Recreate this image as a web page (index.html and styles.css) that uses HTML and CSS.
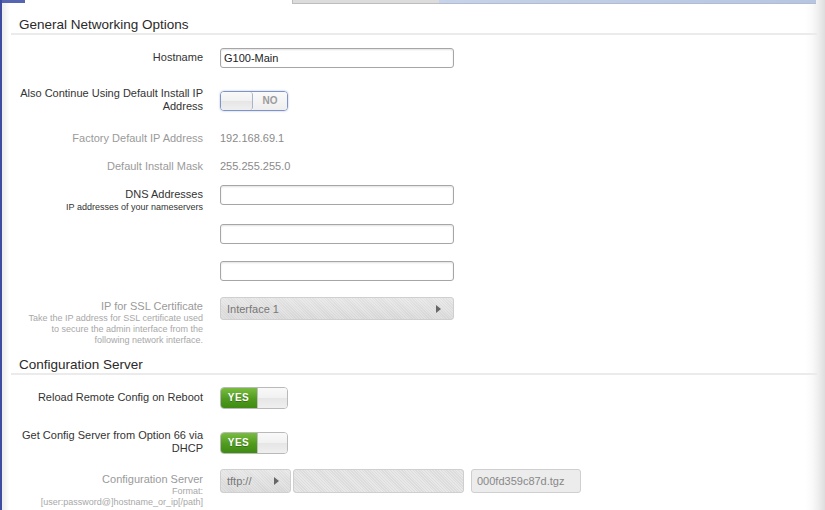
FILE: index.html
```html
<!DOCTYPE html>
<html>
<head>
<meta charset="utf-8">
<link rel="stylesheet" href="styles.css">
</head>
<body>
<div class="frame">
  <div class="tabs">
    <div class="tab tab-active"></div>
    <div class="tab tab-blank"></div>
    <div class="tab tab-grey"></div>
    <div class="tab tab-blue"></div>
  </div>
  <div class="panel">
    <h2 class="section first">General Networking Options</h2>

    <div class="row r-host">
      <div class="label pad2">Hostname</div>
      <div class="ctrl"><div class="input">G100-Main</div></div>
    </div>

    <div class="row r-also">
      <div class="label two">Also Continue Using Default Install IP<br>Address</div>
      <div class="ctrl"><div class="toggle off mt5"><span class="knob"></span><span class="state">NO</span></div></div>
    </div>

    <div class="row r-28">
      <div class="label dim">Factory Default IP Address</div>
      <div class="ctrl value">192.168.69.1</div>
    </div>

    <div class="row r-26">
      <div class="label dim">Default Install Mask</div>
      <div class="ctrl value">255.255.255.0</div>
    </div>

    <div class="row r-39">
      <div class="label pad2">DNS Addresses<div class="sub dark">IP addresses of your nameservers</div></div>
      <div class="ctrl"><div class="input"></div></div>
    </div>

    <div class="row r-37">
      <div class="label"></div>
      <div class="ctrl"><div class="input"></div></div>
    </div>

    <div class="row r-36">
      <div class="label"></div>
      <div class="ctrl"><div class="input"></div></div>
    </div>

    <div class="row r-ssl">
      <div class="label pad2 dim">IP for SSL Certificate<div class="sub">Take the IP address for SSL certificate used<br>to secure the admin interface from the<br>following network interface.</div></div>
      <div class="ctrl"><div class="select wide"><span>Interface 1</span><span class="arrow"></span></div></div>
    </div>

    <h2 class="section">Configuration Server</h2>

    <div class="row r-41 mt12">
      <div class="label pad3">Reload Remote Config on Reboot</div>
      <div class="ctrl"><div class="toggle on"><span class="state">YES</span><span class="knob"></span></div></div>
    </div>

    <div class="row r-41">
      <div class="label two">Get Config Server from Option 66 via<br>DHCP</div>
      <div class="ctrl"><div class="toggle on mt4"><span class="state">YES</span><span class="knob"></span></div></div>
    </div>

    <div class="row">
      <div class="label pad3 dim">Configuration Server<div class="sub">Format:<br>[user:password@]hostname_or_ip[/path]</div></div>
      <div class="ctrl inline">
        <div class="select proto"><span>tftp://</span><span class="arrow"></span></div>
        <div class="input hatched host"></div>
        <div class="input disabled file">000fd359c87d.tgz</div>
      </div>
    </div>
  </div>
</div>
</body>
</html>
```

FILE: styles.css
```css
html, body {
  margin: 0;
  padding: 0;
  background: #fff;
  height: 100%;
  overflow: hidden;
}

.frame {
  height: 510px;
  border-left: 2px solid #3d4c9f;
  background:
    linear-gradient(to left, #dedede 0, #efefef 7px, #fafafa 13px, rgba(255,255,255,0) 20px),
    linear-gradient(to right, #ececec 0, rgba(255,255,255,0) 8px),
    #fff;
  font-family: "Liberation Sans", Arial, sans-serif;
  color: #333;
}

.tabs {
  display: flex;
  height: 4px;
}
.tab { height: 100%; }
.tab-active { width: 23px; background: #5565b2; height: 3px; }
.tab-blank { width: 267px; }
.tab-grey {
  width: 147px;
  background: #dcdcdc;
  border-bottom: 1px solid #bdbdbd;
  border-left: 1px solid #bdbdbd;
  box-sizing: border-box;
}
.tab-blue {
  width: 377px;
  background: linear-gradient(to right, #c6d3e8, #b6c6e2);
  border-bottom: 1px solid #b2bccc;
  box-sizing: border-box;
}

.panel {
  display: flex;
  flex-direction: column;
}

.section {
  margin: 0 8px 0 9px;
  padding: 0 0 0 8px;
  font-size: 13.5px;
  font-weight: normal;
  line-height: 16px;
  height: 16px;
  color: #2a2a2a;
  border-bottom: 2px solid #ebebeb;
}
.section.first { margin-top: 13px; }

.row {
  display: grid;
  grid-template-columns: 201px 1fr;
  column-gap: 17px;
  align-items: start;
}
.r-host { margin-top: 13px; height: 38px; }
.r-also { height: 45px; }
.r-28 { height: 28px; }
.r-26 { height: 26px; }
.r-39 { height: 39px; }
.r-37 { height: 37px; }
.r-36 { height: 36px; }
.r-ssl { height: 60px; }
.r-41 { height: 41px; }
.mt12 { margin-top: 12px; }

.label {
  text-align: right;
  font-size: 11px;
  line-height: 14px;
  color: #333;
}
.label.two { line-height: 13px; padding-top: 1px; }
.label.pad2 { padding-top: 2px; }
.label.pad3 { padding-top: 3px; }
.label.dim { color: #9a9a9a; }

.sub {
  font-size: 9px;
  line-height: 11px;
  color: #a8a8a8;
}
.sub.dark { color: #333; line-height: 12px; }

.value {
  font-size: 11px;
  line-height: 14px;
  color: #8a8a8a;
}

.input {
  box-sizing: border-box;
  width: 234px;
  height: 20px;
  border: 1px solid #a6a6a6;
  border-radius: 3px;
  background: #fff;
  box-shadow: inset 0 1px 2px rgba(0,0,0,0.12);
  font-size: 11px;
  line-height: 18px;
  padding-left: 3px;
  color: #222;
}

.toggle {
  box-sizing: border-box;
  width: 68px;
  height: 21px;
  border-radius: 4px;
  display: flex;
  overflow: hidden;
  font-size: 10px;
  font-weight: bold;
}
.mt5 { margin-top: 5px; }
.mt4 { margin-top: 4px; }
.toggle .knob {
  background: linear-gradient(#f9f9f9, #f1f1f1 50%, #e6e6e6 52%, #efefef);
}
.toggle.off {
  border: 1px solid #7f93c6;
  box-shadow: 0 0 2px rgba(100,130,200,0.6);
  height: 20px;
}
.toggle.off .knob {
  width: 31px;
  border-right: 1px solid #a9b3c9;
  border-radius: 0 3px 3px 0;
}
.toggle.off .state {
  flex: 1;
  text-align: center;
  line-height: 18px;
  color: #9c9c9c;
  background: linear-gradient(#fafafa, #eeeeee);
}
.toggle.on {
  height: 22px;
  border: 1px solid #b9b9b9;
}
.toggle.on .state {
  width: 37px;
  margin: -1px 0 -1px -1px;
  text-align: center;
  line-height: 22px;
  color: #fff;
  letter-spacing: 0.5px;
  background: linear-gradient(#7cc043, #4f9a1e 55%, #3d8a12);
  border-radius: 3px 0 0 3px;
  text-shadow: 0 1px 0 rgba(0,0,0,0.25);
}
.toggle.on .knob {
  flex: 1;
  border-left: 1px solid #bfbfbf;
}

.select {
  box-sizing: border-box;
  height: 23px;
  border: 1px solid #cfcfcf;
  border-radius: 3px;
  background:
    repeating-linear-gradient(45deg, rgba(255,255,255,0.18) 0 1px, rgba(0,0,0,0.015) 1px 2px),
    linear-gradient(#e6e6e6, #d9d9d9);
  display: flex;
  align-items: center;
  justify-content: space-between;
  padding: 0 12px 0 6px;
  font-size: 11px;
  color: #777;
}
.select.wide { width: 234px; }
.arrow {
  width: 0;
  height: 0;
  border-left: 5px solid #666;
  border-top: 4px solid transparent;
  border-bottom: 4px solid transparent;
}

.ctrl.inline {
  display: flex;
  gap: 2px;
  align-items: flex-start;
}
.select.proto {
  width: 71px;
  height: 24px;
  padding: 0 11px 0 6px;
}
.input.hatched {
  width: 171px;
  height: 24px;
  border-color: #cfcfcf;
  background:
    repeating-linear-gradient(45deg, rgba(255,255,255,0.25) 0 1px, rgba(0,0,0,0.015) 1px 2px),
    #e0e0e0;
  box-shadow: none;
}
.input.disabled {
  width: 110px;
  height: 24px;
  margin-left: 5px;
  border-color: #cfcfcf;
  background: #ececec;
  color: #888;
  line-height: 22px;
  padding-left: 5px;
  box-shadow: none;
}
```
